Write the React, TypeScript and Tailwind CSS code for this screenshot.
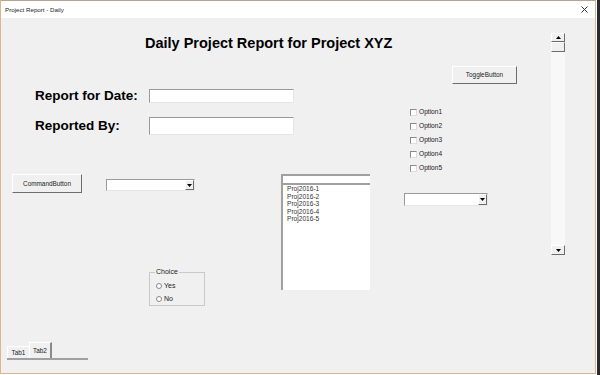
import React from "react";

// ── Shared bevel styles ─────────────────────────────────────────
const raised =
  "border border-t-white border-l-white border-r-[#6d6d6d] border-b-[#6d6d6d] bg-[#f0f0f0]";
const sunken =
  "bg-white border border-t-[#9a9a9a] border-l-[#9a9a9a] border-r-[#e6e6e6] border-b-[#e6e6e6]";

function DownArrow() {
  return (
    <svg width="5" height="3" viewBox="0 0 5 3">
      <polygon points="0,0 5,0 2.5,3" fill="#000" />
    </svg>
  );
}

function UpArrow() {
  return (
    <svg width="5" height="3" viewBox="0 0 5 3">
      <polygon points="0,3 5,3 2.5,0" fill="#000" />
    </svg>
  );
}

function Combo({ className }: { className: string }) {
  return (
    <div className={`${sunken} flex justify-end ${className}`}>
      <div className={`${raised} w-[9px] h-full flex items-center justify-center`}>
        <DownArrow />
      </div>
    </div>
  );
}

function Checkbox({ label }: { label: string }) {
  return (
    <div className="h-[14px] flex items-center gap-[2px]">
      <div className="w-[7px] h-[7px] bg-white border border-t-[#8a8a8a] border-l-[#8a8a8a] border-r-[#dcdcdc] border-b-[#dcdcdc]" />
      <span className="text-[6.6px] leading-[8px] text-[#222]">{label}</span>
    </div>
  );
}

function Radio({ label }: { label: string }) {
  return (
    <div className="h-[13px] flex items-center gap-[2px] pl-[4px]">
      <div className="w-[6px] h-[6px] rounded-full bg-white border border-[#8a8a8a]" />
      <span className="text-[7px] leading-[8px] text-[#222]">{label}</span>
    </div>
  );
}

export default function App() {
  const projects = ["Proj2016-1", "Proj2016-2", "Proj2016-3", "Proj2016-4", "Proj2016-5"];

  return (
    <div
      className="w-[600px] h-[375px] flex bg-white overflow-hidden text-black"
      style={{ fontFamily: '"Liberation Sans", Arial, sans-serif' }}
    >
      <div className="w-[596px] h-[374px] flex flex-col border border-[#dcb78c] border-t-[#b8a48e]">
        {/* Title bar */}
        <div className="h-[17px] bg-white flex items-center justify-between pl-[4px] pr-[7px]">
          <span className="text-[6.2px] leading-[8px] text-[#222]">Project Report - Daily</span>
          <svg width="7" height="7" viewBox="0 0 7 7">
            <path d="M0.5 0.5 L6.5 6.5 M6.5 0.5 L0.5 6.5" stroke="#333" strokeWidth="1" />
          </svg>
        </div>

        {/* Form body */}
        <div className="flex-1 bg-[#f0f0f0] flex">
          <div className="w-[550px] flex flex-col">
            <h1 className="mt-[16px] ml-[144px] h-[18px] leading-[18px] text-[14.5px] font-bold">
              Daily Project Report for Project XYZ
            </h1>

            <div className="flex items-start">
              {/* Left part */}
              <div className="w-[403px] flex flex-col">
                <div className="mt-[37px] h-[14px] flex items-center">
                  <span className="ml-[34px] w-[114px] text-[13.5px] font-bold leading-[14px]">
                    Report for Date:
                  </span>
                  <div className={`${sunken} w-[145px] h-[14px]`} />
                </div>
                <div className="mt-[14px] h-[18px] flex items-center">
                  <span className="ml-[34px] w-[114px] text-[13.5px] font-bold leading-[14px]">
                    Reported By:
                  </span>
                  <div className={`${sunken} w-[145px] h-[18px]`} />
                </div>

                <div className="mt-[39px] flex items-start">
                  <div className="w-[280px] flex flex-col">
                    <div className="flex items-start">
                      <button
                        className={`${raised} ml-[11px] w-[70px] h-[19px] text-[6.4px] leading-[8px] text-[#222] flex items-center justify-center`}
                      >
                        CommandButton
                      </button>
                      <Combo className="ml-[24px] mt-[5px] w-[89px] h-[12px]" />
                    </div>
                    <fieldset className="ml-[148px] mt-[75px] w-[56px] h-[38px] border border-[#c9c9c9] px-[2px] pt-[3px]">
                      <legend className="ml-[3px] px-[1px] text-[7px] leading-[8px] text-[#222]">
                        Choice
                      </legend>
                      <Radio label="Yes" />
                      <Radio label="No" />
                    </fieldset>
                  </div>

                  <div className="w-[89px] h-[116px] bg-white border-l-2 border-t-2 border-[#a0a0a0] flex flex-col">
                    <div className="h-[9px] border-b-2 border-[#a0a0a0]" />
                    <div className="pl-[4px]">
                      {projects.map((p) => (
                        <div key={p} className="text-[6.6px] leading-[7.6px] text-[#333]">
                          {p}
                        </div>
                      ))}
                    </div>
                  </div>
                </div>

                {/* Tabs */}
                <div className="mt-[36px] ml-[6px] w-[81px] flex items-end border-b-2 border-b-[#a0a0a0]">
                  <div className="h-[12px] w-[22px] border-t border-l border-t-white border-l-white flex items-center justify-center text-[6.4px] leading-[8px] text-[#222]">
                    Tab1
                  </div>
                  <div className="h-[16px] w-[23px] border-t border-l border-r-2 border-t-white border-l-white border-r-[#8a8a8a] flex items-center justify-center text-[6.4px] leading-[8px] text-[#222]">
                    Tab2
                  </div>
                </div>
              </div>

              {/* Right part */}
              <div className="flex flex-col">
                <button
                  className={`${raised} ml-[48px] mt-[14px] w-[65px] h-[18px] text-[6.4px] leading-[8px] text-[#222] flex items-center justify-center`}
                >
                  ToggleButton
                </button>
                <div className="mt-[21px] ml-[6px] flex flex-col">
                  <Checkbox label="Option1" />
                  <Checkbox label="Option2" />
                  <Checkbox label="Option3" />
                  <Checkbox label="Option4" />
                  <Checkbox label="Option5" />
                </div>
                <Combo className="mt-[18px] w-[84px] h-[13px]" />
              </div>
            </div>
          </div>

          {/* Scrollbar */}
          <div className="mt-[15px] w-[14px] h-[222px] bg-[#f8f8f8] flex flex-col">
            <div className={`${raised} h-[9px] flex items-center justify-center`}>
              <UpArrow />
            </div>
            <div className={`${raised} h-[10px]`} />
            <div className="flex-1" />
            <div className={`${raised} h-[10px] flex items-center justify-center`}>
              <DownArrow />
            </div>
          </div>
        </div>
      </div>
      <div className="w-[1px] h-full bg-white" />
      <div className="w-[3px] h-full bg-[#2a2a2a]" />
    </div>
  );
}
